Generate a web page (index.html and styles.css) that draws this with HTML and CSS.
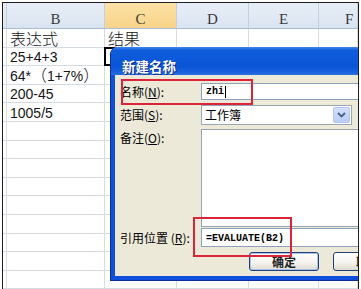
FILE: index.html
```html
<!DOCTYPE html>
<html lang="zh-CN">
<head>
<meta charset="utf-8">
<link rel="stylesheet" href="styles.css">
</head>
<body>
<div class="frame">
  <div class="hdr">
    <div class="hc stub"></div>
    <div class="hc">B</div>
    <div class="hc sel">C</div>
    <div class="hc">D</div>
    <div class="hc">E</div>
    <div class="hc f">F</div>
  </div>
  <div class="row"><div class="c"></div><div class="c cj">表达式</div><div class="c cj">结果</div><div class="c"></div><div class="c"></div><div class="c"></div></div>
  <div class="row"><div class="c"></div><div class="c">25+4+3</div><div class="c active"></div><div class="c"></div><div class="c"></div><div class="c"></div></div>
  <div class="row"><div class="c"></div><div class="c"><span class="t">64*<span class="fw">（</span>1+7%<span class="fw">）</span></span></div><div class="c"></div><div class="c"></div><div class="c"></div><div class="c"></div></div>
  <div class="row"><div class="c"></div><div class="c">200-45</div><div class="c"></div><div class="c"></div><div class="c"></div><div class="c"></div></div>
  <div class="row"><div class="c"></div><div class="c">1005/5</div><div class="c"></div><div class="c"></div><div class="c"></div><div class="c"></div></div>
  <div class="row"><div class="c"></div><div class="c"></div><div class="c"></div><div class="c"></div><div class="c"></div><div class="c"></div></div>
  <div class="row"><div class="c"></div><div class="c"></div><div class="c"></div><div class="c"></div><div class="c"></div><div class="c"></div></div>
  <div class="row"><div class="c"></div><div class="c"></div><div class="c"></div><div class="c"></div><div class="c"></div><div class="c"></div></div>
  <div class="row"><div class="c"></div><div class="c"></div><div class="c"></div><div class="c"></div><div class="c"></div><div class="c"></div></div>
  <div class="row"><div class="c"></div><div class="c"></div><div class="c"></div><div class="c"></div><div class="c"></div><div class="c"></div></div>
  <div class="row"><div class="c"></div><div class="c"></div><div class="c"></div><div class="c"></div><div class="c"></div><div class="c"></div></div>
  <div class="row"><div class="c"></div><div class="c"></div><div class="c"></div><div class="c"></div><div class="c"></div><div class="c"></div></div>
  <div class="row"><div class="c"></div><div class="c"></div><div class="c"></div><div class="c"></div><div class="c"></div><div class="c"></div></div>
  <div class="row"><div class="c"></div><div class="c"></div><div class="c"></div><div class="c"></div><div class="c"></div><div class="c"></div></div>

  <div class="dialog">
    <div class="title">新建名称</div>
    <div class="dbody">
      <div class="drow r-name">
        <span class="lbl">名称(<u>N</u>):</span>
        <div class="field input wide"><span class="val">zhi</span><span class="caret"></span></div>
      </div>
      <div class="drow r-scope">
        <span class="lbl">范围(<u>S</u>):</span>
        <div class="field combo">
          <span class="cval">工作簿</span>
          <span class="cbtn"><svg width="9" height="6" viewBox="0 0 9 6"><path d="M1 1 L4.5 4.5 L8 1" fill="none" stroke="#4a5f8a" stroke-width="1.8"/></svg></span>
        </div>
      </div>
      <div class="drow r-note">
        <span class="lbl">备注(<u>O</u>):</span>
        <div class="field area wide"></div>
      </div>
      <div class="drow r-ref">
        <span class="lbl">引用位置 (<u>R</u>):</span>
        <div class="field input wide ref"><span class="val">=EVALUATE(B2)</span></div>
      </div>
      <div class="drow r-btn">
        <button class="btn ok">确定</button>
        <button class="btn">取消</button>
      </div>
    </div>
  </div>

  <div class="mark mark-name"></div>
  <div class="mark mark-ref"></div>
</div>
</body>
</html>
```

FILE: styles.css
```css
* { box-sizing: border-box; margin: 0; padding: 0; }
html, body { background: #fff; }
body { width: 361px; height: 289px; overflow: hidden; }

.frame {
  position: relative;
  margin: 2px 2px 0 2px;
  height: 287px;
  border: 1px solid #1e1e1e;
  border-bottom: 0;
  overflow: hidden;
  background: #fff;
}

.hdr, .row {
  display: grid;
  grid-template-columns: 4px 98px 72px 72px 70px 1fr;
}

.hdr {
  height: 26px;
  border-bottom: 1px solid #a9bdd4;
  background: linear-gradient(#e8eef7, #dae4f1);
}
.hc {
  border-right: 1px solid #c3d0e2;
  display: flex;
  align-items: flex-end;
  justify-content: center;
  padding-bottom: 1px;
  font: 15px/15px "Liberation Serif", serif;
  color: #3a3a3a;
}
.hc.sel { background: linear-gradient(#fbe1a4, #f8d48a); }
.hc.f { justify-content: flex-start; padding-left: 26px; }

.row {
  height: 18.6px;
  border-bottom: 1px solid #d6dae1;
}
.c {
  border-right: 1px solid #d6dae1;
  display: flex;
  align-items: flex-end;
  padding: 0 0 0 3px;
  font: 14px/16px "Liberation Sans", Arial, sans-serif;
  color: #151515;
  white-space: nowrap;
}
.c.cj {
  padding-bottom: 1px;
  font: 300 16px/16px "Noto Sans CJK SC", sans-serif;
}
.t { display: block; }
.fw {
  font: 300 16px/0 "Noto Sans CJK SC", sans-serif;
}
.c.active { outline: 2px solid #000; outline-offset: -1px; }

/* dialog */
.dialog {
  position: absolute;
  left: 108px;
  top: 44px;
  width: 290px;
  height: 233px;
  background: #ece9d8;
  border-left: 4px solid #0f4fdc;
  border-bottom: 4px solid #0f4fdc;
  border-top-left-radius: 6px;
  box-shadow: -1px 1px 0 #0b2f9c;
  z-index: 2;
}
.title {
  height: 28px;
  margin-left: -4px;
  padding: 12px 0 0 11px;
  border-top-left-radius: 6px;
  background: linear-gradient(#3d87ef 0, #0e5cdc 12%, #0a55d5 70%, #1a61dc 90%, #2c6ede 100%);
  color: #fff;
  font: bold 13.5px/14px "Noto Sans CJK SC", sans-serif;
  text-shadow: 1px 1px 0 #0a2a8e;
}
.dbody {
  padding-top: 8px;
  display: flex;
  flex-direction: column;
}
.drow { display: flex; align-items: center; }
.lbl {
  width: 86px;
  flex: none;
  padding-left: 5px;
  font: 12px/14px "Noto Sans CJK SC", sans-serif;
  color: #000;
  white-space: nowrap;
}
.r-name { height: 17px; margin-bottom: 5px; }
.r-scope { height: 20px; margin-bottom: 4px; }
.r-note { height: 98px; margin-bottom: 1px; align-items: flex-start; }
.r-note .lbl { padding-top: 2px; }
.r-ref { height: 19px; margin-bottom: 5px; }
.r-btn { height: 19px; padding-left: 134px; gap: 14px; }

.field {
  height: 100%;
  background: #fff;
  border: 1px solid #8ea3bb;
}
.wide { width: 200px; }
.input { display: flex; align-items: center; padding-left: 4px; }
.ref { padding-top: 2px; }
.val {
  font: bold 10px/12px "Liberation Mono", monospace;
  color: #000;
}
.caret { width: 1px; height: 12px; background: #000; margin-left: 1px; }

.combo {
  width: 151px;
  position: relative;
  display: flex;
  align-items: center;
  padding-left: 3px;
  border-color: #9aa7b8;
}
.cval { font: 12px/14px "Noto Sans CJK SC", sans-serif; color: #000; }
.cbtn {
  position: absolute;
  right: 1px;
  top: 1px;
  bottom: 1px;
  width: 17px;
  background: linear-gradient(#d3e0fb, #b9ccf6);
  border: 1px solid #b4c7f0;
  border-radius: 2px;
  display: flex;
  align-items: center;
  justify-content: center;
}
.area { border-color: #9aa4b0; }

.btn {
  flex: none;
  width: 70px;
  height: 19px;
  border: 1px solid #1f3f78;
  border-radius: 3px;
  background: linear-gradient(#ffffff, #f5f4ef 55%, #dedacf);
  font: bold 12px/14px "Noto Sans CJK SC", sans-serif;
  color: #222;
}
.btn.ok { box-shadow: inset 0 0 0 1px #a8c2ec; }

/* annotation boxes */
.mark {
  position: absolute;
  border: 2px solid #dc2438;
  z-index: 3;
}
.mark-name { left: 118px; top: 76px; width: 132px; height: 26px; }
.mark-ref { left: 190px; top: 214px; width: 99px; height: 40px; }
```
